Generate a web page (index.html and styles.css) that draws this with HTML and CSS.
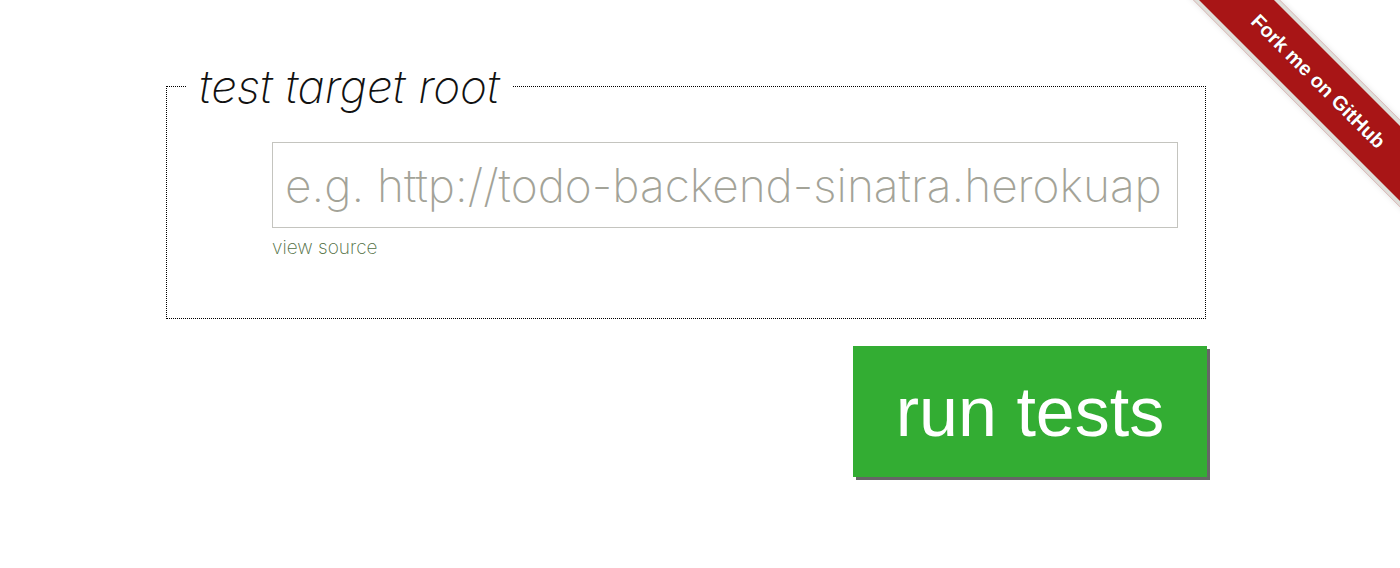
FILE: index.html
```html
<!DOCTYPE html>
<html>
<head>
<meta charset="utf-8">
<link rel="stylesheet" href="styles.css">
</head>
<body>
<div class="main">
  <fieldset class="target">
    <legend class="target-legend">test target root</legend>
    <div class="target-body">
      <input class="target-input" type="text" placeholder="e.g. http://todo-backend-sinatra.herokuapp.com/todos">
      <a class="source-link" href="#">view source</a>
    </div>
  </fieldset>
  <div class="actions">
    <button class="run-button">run tests</button>
  </div>
</div>
<div class="ribbon-wrap">
  <a class="ribbon" href="#">Fork me on GitHub</a>
</div>
</body>
</html>
```

FILE: styles.css
```css
html, body {
  margin: 0;
  padding: 0;
  background: #fff;
}
body {
  font-family: "Inter", "Liberation Sans", sans-serif;
  position: relative;
  height: 568px;
  overflow: hidden;
}
.main {
  margin-left: 166px;
  width: 1040px;
  padding-top: 59px;
}
.target {
  margin: 0;
  padding: 0;
  border: 1px dotted #000;
  min-width: 0;
}
.target-legend {
  margin-left: 20px;
  padding: 0 14px 0 12px;
  font-family: "Inter", "Liberation Sans", sans-serif;
  font-weight: 200;
  font-style: italic;
  font-size: 46px;
  line-height: 54px;
  color: #111;
}
.target-body {
  display: flex;
  flex-direction: column;
  align-items: flex-start;
  padding: 29px 0 59px 105px;
}
.target-input {
  box-sizing: border-box;
  width: 906px;
  height: 86px;
  margin: 0;
  border: 1px solid #c4c4bf;
  padding: 0 12px;
  font-family: "Inter", "Liberation Sans", sans-serif;
  font-weight: 200;
  font-size: 46px;
  color: #333;
  outline: none;
  background: #fff;
}
.target-input::placeholder {
  color: #a3a398;
}
.source-link {
  margin-top: 9px;
  font-family: "Inter", "Liberation Sans", sans-serif;
  font-weight: 200;
  font-size: 19px;
  line-height: 22px;
  color: #4f6e42;
  text-decoration: none;
}
.actions {
  display: flex;
  justify-content: flex-end;
  margin-top: 27px;
}
.run-button {
  width: 354px;
  height: 131px;
  margin-right: -1px;
  border: 0;
  background: #33ad33;
  color: #fff;
  font-family: "Liberation Sans", sans-serif;
  font-size: 70px;
  box-shadow: 3px 3px 0 #666;
  padding: 0;
  cursor: pointer;
}
.ribbon-wrap {
  position: absolute;
  top: 0;
  right: 0;
  width: 214px;
  height: 214px;
  overflow: hidden;
}
.ribbon {
  position: absolute;
  left: -28px;
  top: 51px;
  width: 320px;
  height: 61px;
  box-sizing: border-box;
  transform: rotate(45deg);
  background: #a81516;
  border-top: 4px solid #dfdfda;
  border-bottom: 4px solid #dfdfda;
  box-shadow: 0 0 6px rgba(0,0,0,0.12);
  color: #fff;
  font-family: "Liberation Sans", sans-serif;
  font-weight: bold;
  font-size: 20px;
  line-height: 53px;
  text-align: center;
  text-decoration: none;
  text-shadow: 0 0 1px rgba(0,0,0,0.5);
}
```
